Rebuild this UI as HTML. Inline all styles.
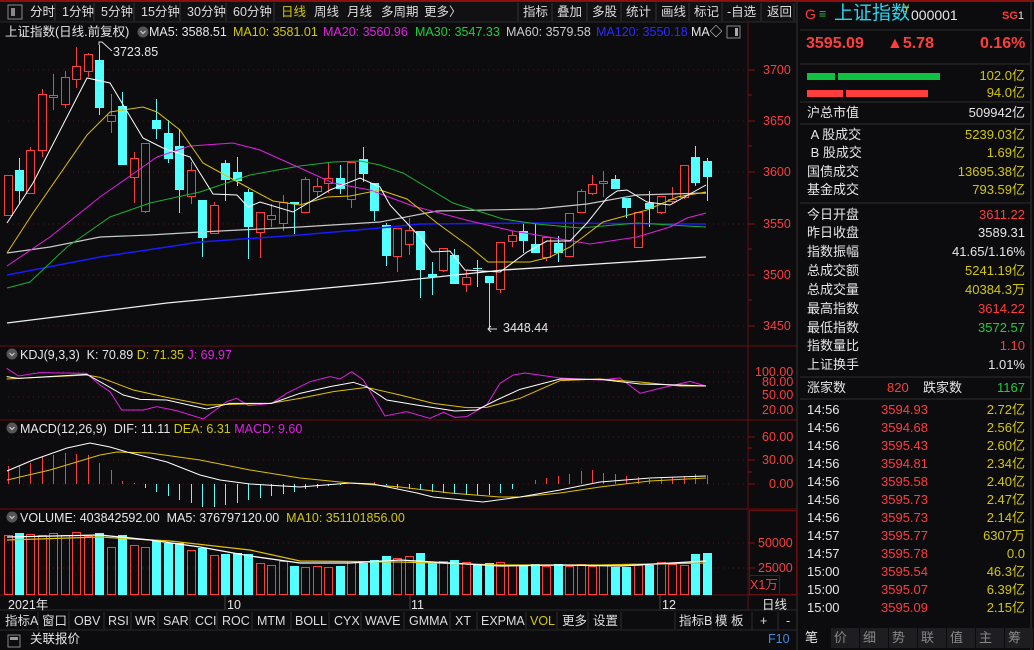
<!DOCTYPE html>
<html><head><meta charset="utf-8">
<style>
*{margin:0;padding:0;box-sizing:border-box}
body{width:1034px;height:650px;background:#0c0c0f;overflow:hidden;position:relative;font-family:"Liberation Sans","Noto Sans CJK SC",sans-serif;font-size:12.5px;color:#ddd}
.a{position:absolute;white-space:nowrap;line-height:14px}
.r{color:#ff3d3d}.y{color:#d4c800}.c{color:#33e0ff}.g{color:#19d13a}.m{color:#e020e0}.w{color:#e6e6e6}.b{color:#2a2aff}.gr{color:#ccc}
.rt{position:absolute;right:9px;text-align:right;white-space:nowrap;line-height:14px;font-size:13px}
.lb{position:absolute;left:807px;white-space:nowrap;line-height:14px;font-size:13px;color:#e6e6e6}
svg{position:absolute;left:0;top:0}
</style></head><body>
<svg id="s" width="1034" height="650" viewBox="0 0 1034 650"></svg>

<!-- top toolbar -->
<div class="a" style="top:5px;left:30px;color:#e6e6e6">分时</div>
<div class="a" style="top:5px;left:62px">1分钟</div>
<div class="a" style="top:5px;left:101px">5分钟</div>
<div class="a" style="top:5px;left:141px">15分钟</div>
<div class="a" style="top:5px;left:187px">30分钟</div>
<div class="a" style="top:5px;left:233px">60分钟</div>
<div class="a y" style="top:5px;left:281px">日线</div>
<div class="a" style="top:5px;left:314px">周线</div>
<div class="a" style="top:5px;left:347px">月线</div>
<div class="a" style="top:5px;left:381px">多周期</div>
<div class="a" style="top:5px;left:424px">更多〉</div>
<div class="a" style="top:5px;left:523px">指标</div>
<div class="a" style="top:5px;left:557px">叠加</div>
<div class="a" style="top:5px;left:592px">多股</div>
<div class="a" style="top:5px;left:626px">统计</div>
<div class="a" style="top:5px;left:661px">画线</div>
<div class="a" style="top:5px;left:694px">标记</div>
<div class="a" style="top:5px;left:727px">-自选</div>
<div class="a" style="top:5px;left:767px">返回</div>

<!-- MA row -->
<div class="a w" style="top:25px;left:5px">上证指数(日线.前复权)</div>
<div class="a w" style="top:25px;left:149px">MA5: 3588.51</div>
<div class="a y" style="top:25px;left:233px">MA10: 3581.01</div>
<div class="a m" style="top:25px;left:323px">MA20: 3560.96</div>
<div class="a g" style="top:25px;left:415px">MA30: 3547.33</div>
<div class="a gr" style="top:25px;left:506px">MA60: 3579.58</div>
<div class="a b" style="top:25px;left:596px">MA120: 3550.18</div>
<div class="a w" style="top:25px;left:691px">MA◇</div>
<div class="a w" style="top:45px;left:113px">3723.85</div>
<div class="a w" style="top:321px;left:503px">3448.44</div>

<!-- price axis -->
<div class="a r" style="top:63px;left:763px">3700</div>
<div class="a r" style="top:114px;left:763px">3650</div>
<div class="a r" style="top:165px;left:763px">3600</div>
<div class="a r" style="top:217px;left:763px">3550</div>
<div class="a r" style="top:268px;left:763px">3500</div>
<div class="a r" style="top:319px;left:763px">3450</div>

<!-- KDJ -->
<div class="a w" style="top:348px;left:20px">KDJ(9,3,3)&nbsp; K: 70.89 <span class="y">D: 71.35</span> <span class="m">J: 69.97</span></div>
<div class="a r" style="top:365px;left:755px">100.00</div>
<div class="a r" style="top:375px;left:762px">80.00</div>
<div class="a r" style="top:388px;left:762px">50.00</div>
<div class="a r" style="top:403px;left:762px">20.00</div>
<!-- MACD -->
<div class="a w" style="top:422px;left:20px">MACD(12,26,9)&nbsp; DIF: 11.11 <span class="y">DEA: 6.31</span> <span class="m">MACD: 9.60</span></div>
<div class="a r" style="top:430px;left:762px">60.00</div>
<div class="a r" style="top:453px;left:762px">30.00</div>
<div class="a r" style="top:477px;left:769px">0.00</div>
<!-- VOL -->
<div class="a w" style="top:511px;left:20px">VOLUME: 403842592.00&nbsp; MA5: 376797120.00&nbsp; <span class="y">MA10: 351101856.00</span></div>
<div class="a r" style="top:536px;left:758px">50000</div>
<div class="a r" style="top:561px;left:758px">25000</div>
<div class="a r" style="top:578px;left:750px">X1万</div>

<!-- x axis -->
<div class="a w" style="top:598px;left:8px">2021年</div>
<div class="a w" style="top:598px;left:227px">10</div>
<div class="a w" style="top:598px;left:411px">11</div>
<div class="a w" style="top:598px;left:662px">12</div>
<div class="a w" style="top:598px;left:762px">日线</div>

<!-- bottom toolbar -->
<div class="a" style="top:614px;left:5px">指标A</div>
<div class="a" style="top:614px;left:42px">窗口</div>
<div class="a" style="top:614px;left:74px">OBV</div>
<div class="a" style="top:614px;left:108px">RSI</div>
<div class="a" style="top:614px;left:135px">WR</div>
<div class="a" style="top:614px;left:163px">SAR</div>
<div class="a" style="top:614px;left:195px">CCI</div>
<div class="a" style="top:614px;left:222px">ROC</div>
<div class="a" style="top:614px;left:257px">MTM</div>
<div class="a" style="top:614px;left:295px">BOLL</div>
<div class="a" style="top:614px;left:334px">CYX</div>
<div class="a" style="top:614px;left:365px">WAVE</div>
<div class="a" style="top:614px;left:409px">GMMA</div>
<div class="a" style="top:614px;left:455px">XT</div>
<div class="a" style="top:614px;left:481px">EXPMA</div>
<div class="a y" style="top:614px;left:530px">VOL</div>
<div class="a" style="top:614px;left:562px">更多</div>
<div class="a" style="top:614px;left:593px">设置</div>
<div class="a" style="top:614px;left:679px">指标B</div>
<div class="a" style="top:614px;left:715px">模 板</div>
<div class="a" style="top:614px;left:760px">+</div>
<div class="a" style="top:614px;left:786px">-</div>
<div class="a w" style="top:632px;left:30px">关联报价</div>
<div class="a" style="top:632px;left:768px;color:#3a8fe0">F10</div>

<!-- right panel -->
<div class="a r" style="top:7px;left:805px;font-size:14px">G</div>
<div class="a g" style="top:7px;left:819px">≡</div>
<div class="a" style="top:3px;left:834px;font-size:19px;line-height:22px;color:#22d8f0">上证指数</div>
<div class="a y" style="top:1px;left:904px;font-size:10px">y</div>
<div class="a w" style="top:8px;left:911px;font-size:14px">000001</div>
<div class="a r" style="top:9px;left:1002px;font-size:11px;font-weight:bold">SG<span class="w" style="font-weight:normal">1</span></div>
<div class="a r" style="top:35px;left:806px;font-size:16px;line-height:18px;font-weight:bold">3595.09</div>
<div class="a r" style="top:35px;left:887px;font-size:16px;line-height:18px;font-weight:bold">▲5.78</div>
<div class="a r" style="top:35px;left:980px;font-size:16px;line-height:18px;font-weight:bold">0.16%</div>
<div class="rt y" style="top:69px">102.0亿</div>
<div class="rt y" style="top:86px">94.0亿</div>

<div class="lb" style="top:106px">沪总市值</div><div class="rt w" style="top:106px">509942亿</div>
<div class="lb" style="top:128px">&nbsp;A 股成交</div><div class="rt y" style="top:128px">5239.03亿</div>
<div class="lb" style="top:146px">&nbsp;B 股成交</div><div class="rt y" style="top:146px">1.69亿</div>
<div class="lb" style="top:165px">国债成交</div><div class="rt y" style="top:165px">13695.38亿</div>
<div class="lb" style="top:183px">基金成交</div><div class="rt y" style="top:183px">793.59亿</div>
<div class="lb" style="top:208px">今日开盘</div><div class="rt r" style="top:208px">3611.22</div>
<div class="lb" style="top:226px">昨日收盘</div><div class="rt w" style="top:226px">3589.31</div>
<div class="lb" style="top:245px">指数振幅</div><div class="rt w" style="top:245px">41.65/1.16%</div>
<div class="lb" style="top:264px">总成交额</div><div class="rt y" style="top:264px">5241.19亿</div>
<div class="lb" style="top:283px">总成交量</div><div class="rt y" style="top:283px">40384.3万</div>
<div class="lb" style="top:302px">最高指数</div><div class="rt r" style="top:302px">3614.22</div>
<div class="lb" style="top:321px">最低指数</div><div class="rt g" style="top:321px">3572.57</div>
<div class="lb" style="top:339px">指数量比</div><div class="rt r" style="top:339px">1.10</div>
<div class="lb" style="top:358px">上证换手</div><div class="rt w" style="top:358px">1.01%</div>
<div class="lb" style="top:381px">涨家数</div>
<div class="a r" style="top:381px;left:887px;font-size:13px">820</div>
<div class="a w" style="top:381px;left:923px;font-size:13px">跌家数</div>
<div class="rt g" style="top:381px">1167</div>

<div id="ticks"></div>

<div class="a w" style="top:631px;left:805px;font-size:13px">笔</div>
<div class="a" style="top:631px;left:834px;font-size:13px;color:#888">价</div>
<div class="a" style="top:631px;left:863px;font-size:13px;color:#888">细</div>
<div class="a" style="top:631px;left:892px;font-size:13px;color:#888">势</div>
<div class="a" style="top:631px;left:921px;font-size:13px;color:#888">联</div>
<div class="a" style="top:631px;left:950px;font-size:13px;color:#888">值</div>
<div class="a" style="top:631px;left:979px;font-size:13px;color:#888">主</div>
<div class="a" style="top:631px;left:1008px;font-size:13px;color:#888">筹</div>

<script>
var T=[["14:56","3594.93","2.72亿"],["14:56","3594.68","2.56亿"],["14:56","3595.43","2.60亿"],["14:56","3594.81","2.34亿"],["14:56","3595.58","2.40亿"],["14:56","3595.73","2.47亿"],["14:56","3595.73","2.14亿"],["14:57","3595.77","6307万"],["14:57","3595.78","0.0"],["15:00","3595.54","46.3亿"],["15:00","3595.07","6.39亿"],["15:00","3595.09","2.15亿"]];
var h="";T.forEach(function(t,i){var y=403+i*18;h+='<div class="lb" style="top:'+y+'px">'+t[0]+'</div><div class="a r" style="top:'+y+'px;left:881px;font-size:13px">'+t[1]+'</div><div class="rt y" style="top:'+y+'px">'+t[2]+'</div>';});
document.getElementById('ticks').innerHTML=h;

var S='';
function L(x1,y1,x2,y2,c,w,d){S+='<line x1="'+x1+'" y1="'+y1+'" x2="'+x2+'" y2="'+y2+'" stroke="'+c+'" stroke-width="'+(w||1)+'"'+(d?' stroke-dasharray="'+d+'"':'')+'/>';}
function R(x,y,w,hh,f,s){S+='<rect x="'+x+'" y="'+y+'" width="'+w+'" height="'+hh+'" fill="'+(f||'none')+'"'+(s?' stroke="'+s+'"':'')+'/>';}
function P(pts,c,w){S+='<polyline fill="none" stroke="'+c+'" stroke-width="'+(w||1)+'" points="'+pts.map(function(p){return p.join(',')}).join(' ')+'"/>';}
var DR='#6a0d0d';
// top red bar
R(0,0,1034,2,'#8a0f0f');
// toolbar background & separators
R(0,2,797,20,'#111114');
R(8,5,14,14,'none','#888');R(11,8,4,8,'#888');
[55,94,134,180,226,274,518,552,587,621,656,689,722,761,794].forEach(function(x){L(x,3,x,21,'#333')});
L(0,22,797,22,'#2a2a2a');
R(727,26,13,12,'none','#888');R(735,28,3,8,'#aaa');
// circle icons
[[143,32],[12,354],[12,428],[12,517]].forEach(function(p){S+='<circle cx="'+p[0]+'" cy="'+p[1]+'" r="5.5" fill="#555"/><path d="M'+(p[0]-2.5)+' '+(p[1]-1)+' l2.5 2.5 l2.5 -2.5" stroke="#ccc" fill="none" stroke-width="1.2"/>';});
// chart frame
L(748,22,748,610,DR);L(0,346,797,346,DR);L(0,420,797,420,DR);L(0,509,797,509,DR);L(0,595,797,595,DR);
L(797,0,797,650,'#333');L(1031,0,1031,650,'#333');
// grid
[70,121,172,224,275,326].forEach(function(y){L(8,y,745,y,'#5a1010',1,'1 4');L(748,y,755,y,'#8a1010')});
[95,146,198,249,300].forEach(function(y){L(748,y,752,y,'#8a1010')});
[372,382,397,411].forEach(function(y){L(8,y,745,y,'#5a1010',1,'1 4')});
[437,460,484].forEach(function(y){L(8,y,745,y,'#5a1010',1,'1 4');L(748,y,755,y,'#8a1010')});
[448,472].forEach(function(y){L(748,y,752,y,'#8a1010')});
[543,568].forEach(function(y){L(8,y,745,y,'#5a1010',1,'1 4');L(748,y,755,y,'#8a1010')});
R(749.5,510.5,47,84,'none','#6a0d0d');R(749.5,575.5,30,19,'none','#6a0d0d');
// x ticks
[225,410,660].forEach(function(x){L(x,595,x,610,'#444')});
L(0,610,797,610,'#2a2a2a');L(0,630,797,630,'#2a2a2a');
[38,69,104,131,158,190,217,252,291,329,361,404,450,477,526,557,588,621,675,711,752,778].forEach(function(x){L(x,612,x,629,'#2e2e2e')});
R(8,635,12,12,'none','#888');R(10,637,8,3,'#999');
// right panel lines
[30,64,102,124,203,377,399].forEach(function(y){L(800,y,1031,y,'#2e2e2e')});
R(807,73,28,7,'#10c040');R(838,73,102,7,'#10c040');R(807,90,36,7,'#ff3d3d');R(846,90,82,7,'#ff3d3d');
for(var k=0;k<8;k++){R(802+k*29,628,28,20,k==0?'#0c0c0f':'#1e1e22');}

// candles
var C=[['r',175,215,175,216],['c',170,191,158,204],['r',150,193,147,193],['r',94,150,89,157],['r',95,97,74,110],['r',77,104,71,108],['r',66,79,47,88],['r',54,71,53,77],['c',60,108,45,115],['r',115,121,94,133],['c',106,165,92,165],['r',158,177,152,203],['r',143,211,143,213],['c',120,129,99,139],['c',133,159,120,163],['c',146,190,129,213],['r',170,196,162,204],['c',200,238,200,257],['r',205,233,202,233],['c',163,180,160,201],['c',172,181,157,186],['c',192,227,189,259],['r',212,232,212,258],['r',215,219,204,227],['r',202,223,195,231],['c',202,204,202,234],['r',179,212,177,212],['r',186,191,178,198],['r',178,183,163,193],['c',178,189,165,194],['r',162,199,162,208],['c',159,174,147,182],['c',183,211,183,221],['c',225,256,223,266],['r',228,256,228,272],['r',230,244,218,255],['c',231,270,231,298],['c',274,277,262,295],['r',248,270,248,272],['c',255,284,249,284],['r',277,284,270,292],['c',268,269,260,287],['c',276,283,276,329],['r',242,289,242,293],['r',235,241,231,247],['c',231,241,223,253],['c',244,253,224,253],['r',237,257,237,261],['c',243,253,236,262],['r',213,256,213,256],['r',191,212,189,212],['r',184,193,175,195],['r',181,183,171,197],['c',179,189,175,189],['c',198,208,198,218],['r',212,247,212,247],['c',203,209,191,227],['r',196,212,196,214],['r',199,201,187,204],['r',165,197,165,199],['c',157,183,146,186],['c',161,177,158,201]];
var V=[535,533,534,535,533,535,532,536,533,547,535,545,547,541,543,543,550,548,555,554,553,554,563,565,561,566,567,566,567,566,561,563,560,556,558,556,553,562,561,560,562,565,563,562,565,565,564,566,564,566,564,566,565,567,567,565,565,562,564,565,554,553];
var M=[466,466,463,457,455,453,454,455,463,470,481,483,488,492,496,500,503,507,507,505,503,500,498,496,494,492,489,488,486,485,484,483,482,485,488,489,490,492,493,494,495,495,495,493,489,484,480,478,476,474,471,470,473,474,476,477,479,478,477,476,474,475];
var RC='#ff3d3d',CC='#54ffff';
C.forEach(function(c,i){
 var x=Math.round(7.5+i*11.46);
 if(c[0]=='r'){L(x+0.5,c[3],x+0.5,c[1],RC);L(x+0.5,c[2],x+0.5,c[4],RC);R(x-3.5,c[1]+0.5,8,Math.max(c[2]-c[1],1),'none',RC);}
 else{L(x+0.5,c[3],x+0.5,c[4],CC);R(x-4,c[1],9,Math.max(c[2]-c[1],1),CC);}
 var col=c[0]=='r'?RC:CC;
 if(c[0]=='r')R(x-3.5,V[i]+0.5,8,594-V[i],'none',RC);else R(x-4,V[i],9,595-V[i],CC);
 var m=M[i];L(x+0.5,Math.min(m,484),x+0.5,Math.max(m,484),m<484?RC:CC);
});
// MAs main
P([[7,323],[167,303],[380,283],[503,270],[706,257]],'#f0f0f0',1.3);
P([[7,275],[100,257],[200,242],[300,235],[380,228],[420,224],[537,223],[706,224]],'#1a1aff',1.5);
P([[7,253],[50,247],[100,237],[150,235],[200,232],[300,227],[380,222],[437,211],[537,209],[587,204],[637,195],[706,193]],'#c8c8c8',1.2);
P([[7,288],[30,282],[67,247],[110,217],[150,203],[200,192],[250,175],[300,166],[333,162],[360,161],[380,165],[403,173],[453,203],[503,219],[537,224],[580,228],[637,223],[687,226],[706,227]],'#18b030');
P([[7,266],[50,237],[100,197],[157,157],[190,146],[233,143],[260,150],[300,168],[333,183],[370,190],[413,206],[470,221],[513,231],[590,244],[637,237],[670,227],[687,218],[706,213]],'#e020e0');
P([[7,253],[33,213],[87,135],[110,112],[143,107],[157,112],[180,130],[203,163],[223,174],[247,187],[273,201],[300,205],[327,197],[350,196],[380,190],[407,199],[437,223],[470,247],[488,262],[530,262],[550,257],[570,247],[603,222],[647,210],[677,197],[706,192]],'#e0c000');
P([[7,223],[33,183],[87,78],[110,83],[143,138],[163,148],[190,157],[213,194],[237,195],[248,207],[260,202],[293,212],[330,190],[360,178],[380,187],[390,205],[420,237],[432,252],[450,251],[465,270],[500,272],[527,252],[547,241],[570,241],[587,223],[607,198],[617,191],[627,190],[647,202],[670,205],[706,185]],'#ffffff');
// annotations
P([[99,45],[99,42],[102,42],[112,51]],'#ddd');
P([[488,329],[497,329]],'#ddd');P([[491,326],[488,329],[491,332]],'#ddd');
// KDJ
function kz(a){return a.map(function(p){return [p[0]/3,340+p[1]/3]})}
P(kz([[20,85],[55,108],[120,98],[260,100],[300,135],[330,155],[365,210],[430,210],[470,200],[530,212],[610,237],[680,185],[710,175],[745,197],[815,190],[860,160],[930,125],[990,110],[1020,117],[1055,95],[1090,120],[1155,228],[1220,215],[1290,235],[1330,217],[1365,232],[1400,230],[1460,195],[1500,130],[1540,105],[1575,99],[1680,114],[1800,120],[1860,114],[1920,160],[1980,145],[2070,124],[2118,138]]),'#e020e0');
P(kz([[20,117],[260,105],[300,112],[400,150],[500,172],[620,195],[810,190],[900,175],[1000,155],[1100,142],[1200,165],[1300,190],[1400,203],[1460,202],[1560,175],[1680,122],[1800,117],[1920,126],[2040,138],[2118,138]]),'#e0c000');
P(kz([[20,110],[55,115],[260,103],[300,125],[370,165],[420,178],[500,180],[620,207],[690,190],[815,190],[900,160],[990,140],[1060,127],[1100,140],[1160,180],[1250,195],[1300,203],[1365,213],[1430,210],[1490,180],[1560,148],[1680,117],[1800,118],[1920,132],[2040,135],[2118,138]]),'#ffffff');
// MACD lines
P([[7,480],[50,470],[100,455],[117,452],[150,453],[200,460],[250,470],[300,478],[350,483],[400,487],[450,493],[500,497],[520,497],[560,493],[600,487],[650,481],[706,478]],'#e0c000');
P([[7,471],[33,460],[67,448],[90,443],[110,447],[127,452],[167,462],[200,475],[220,480],[250,484],[300,487],[350,483],[373,484],[417,493],[433,497],[483,502],[520,497],[560,490],[600,482],[650,478],[706,476]],'#ffffff');
// vol MAs
P([[7,540],[100,537],[170,541],[250,550],[300,561],[400,562],[500,565],[600,565],[706,563]],'#e0c000',1.3);
P([[7,537],[100,535],[150,540],[200,547],[250,556],[300,563],[350,563],[400,560],[450,563],[500,566],[560,565],[620,566],[706,561]],'#ffffff',1.3);
document.getElementById('s').innerHTML=S;
</script>
</body></html>
